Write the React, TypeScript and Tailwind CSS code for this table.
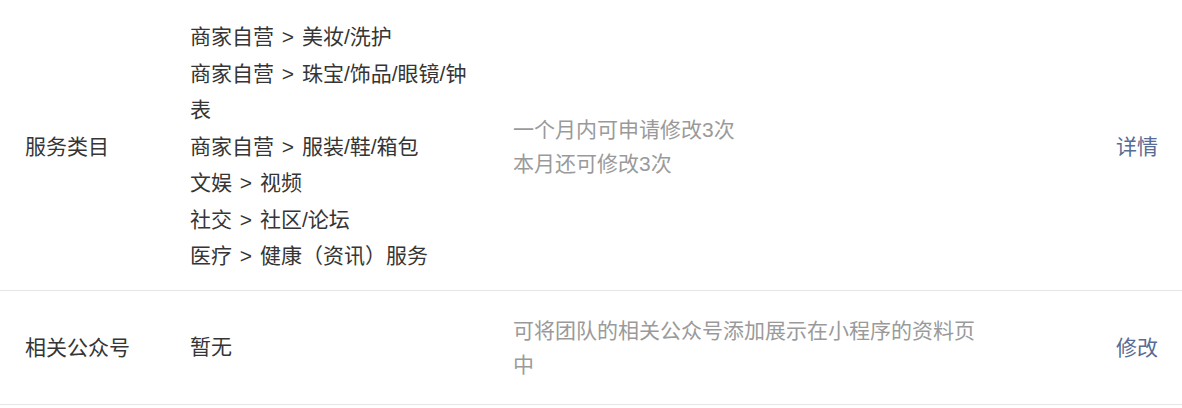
import React from "react";

const valueLines = [
  "商家自营 > 美妆/洗护",
  "商家自营 > 珠宝/饰品/眼镜/钟表",
  "商家自营 > 服装/鞋/箱包",
  "文娱 > 视频",
  "社交 > 社区/论坛",
  "医疗 > 健康（资讯）服务",
];

export default function App() {
  return (
    <div
      className="w-[1182px] bg-white text-[21px] text-[#353535]"
      style={{ fontFamily: '"Liberation Sans", "Noto Sans CJK SC", sans-serif' }}
    >
      <div className="flex items-center border-b border-[#e6e6e6] pt-[19px] pb-[15px]">
        <div className="w-[190px] shrink-0 pl-[25px] leading-[36px]">服务类目</div>
        <div className="w-[292px] shrink-0 leading-[36.5px] [word-spacing:2px]">
          {valueLines.map((l) => (
            <div key={l}>{l}</div>
          ))}
        </div>
        <div className="ml-[31px] w-[472px] shrink-0 leading-[34px] text-[#9a9a9a]">
          <div>一个月内可申请修改3次</div>
          <div>本月还可修改3次</div>
        </div>
        <div className="flex-1" />
        <div className="pr-[24px] leading-[36px] text-[#576b95]">详情</div>
      </div>
      <div className="flex items-center border-b border-[#e6e6e6] pt-[23px] pb-[22px]">
        <div className="w-[190px] shrink-0 pl-[25px] leading-[36px]">相关公众号</div>
        <div className="w-[292px] shrink-0 leading-[36.5px]">暂无</div>
        <div className="ml-[31px] w-[472px] shrink-0 leading-[34px] text-[#9a9a9a]">
          可将团队的相关公众号添加展示在小程序的资料页中
        </div>
        <div className="flex-1" />
        <div className="pr-[24px] leading-[36px] text-[#576b95]">修改</div>
      </div>
    </div>
  );
}
